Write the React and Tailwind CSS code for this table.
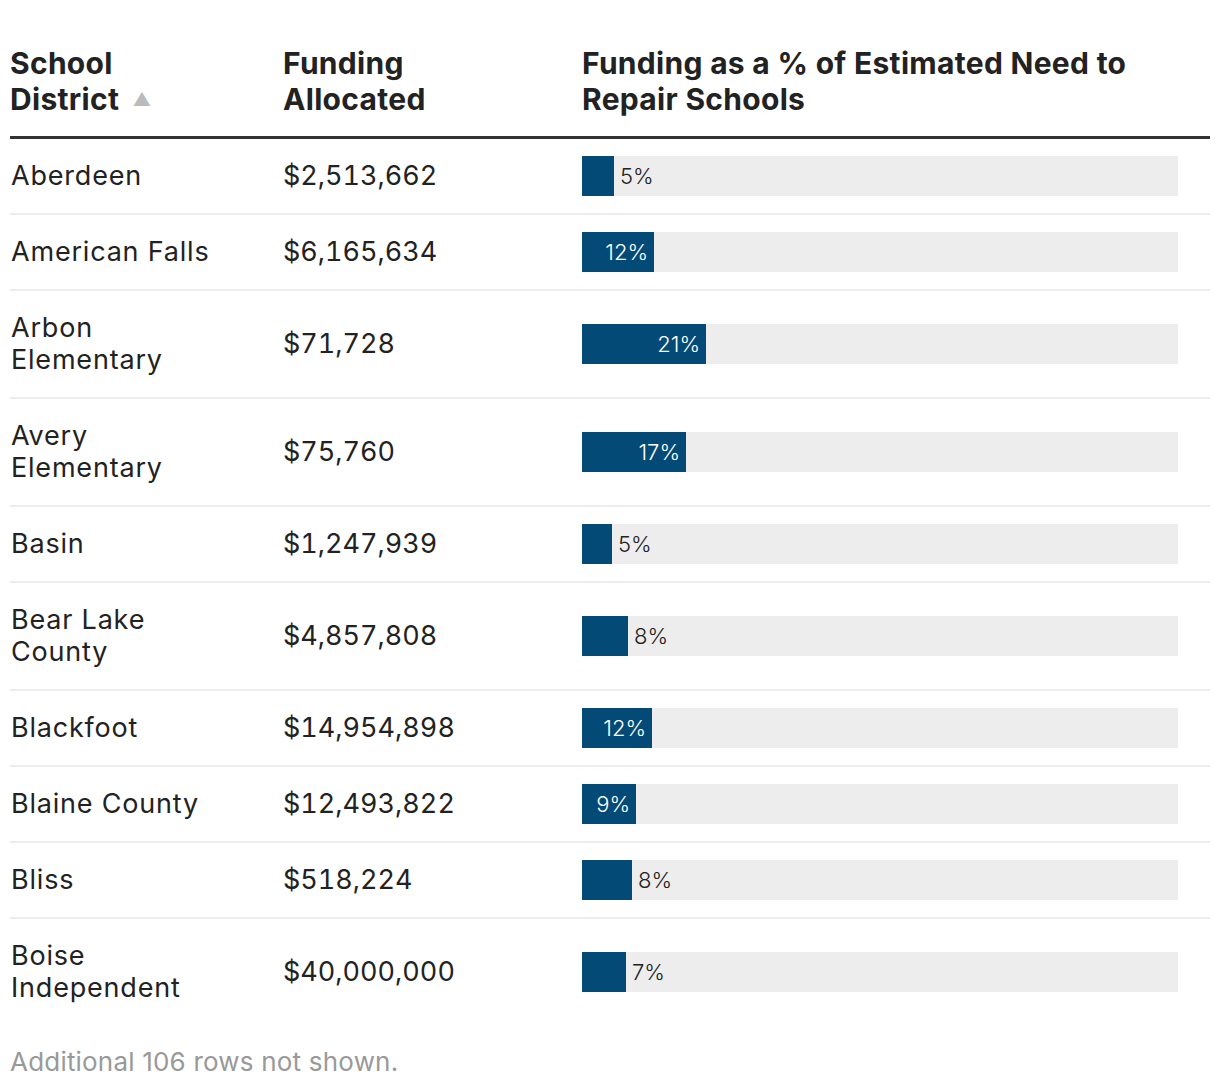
import React from 'react';

const rows = [
  { name: 'Aberdeen', amount: '$2,513,662', pct: '5%', w: 32 },
  { name: 'American Falls', amount: '$6,165,634', pct: '12%', w: 72 },
  { name: 'Arbon Elementary', amount: '$71,728', pct: '21%', w: 124, wrap: ['Arbon', 'Elementary'] },
  { name: 'Avery Elementary', amount: '$75,760', pct: '17%', w: 104, wrap: ['Avery', 'Elementary'] },
  { name: 'Basin', amount: '$1,247,939', pct: '5%', w: 30 },
  { name: 'Bear Lake County', amount: '$4,857,808', pct: '8%', w: 46, wrap: ['Bear Lake', 'County'] },
  { name: 'Blackfoot', amount: '$14,954,898', pct: '12%', w: 70 },
  { name: 'Blaine County', amount: '$12,493,822', pct: '9%', w: 54 },
  { name: 'Bliss', amount: '$518,224', pct: '8%', w: 50 },
  { name: 'Boise Independent', amount: '$40,000,000', pct: '7%', w: 44, wrap: ['Boise', 'Independent'], last: true },
];

const Bar = ({ pct, w }) => {
  const inside = w >= 54;
  return (
    <div className="relative h-[40px] w-[596px] bg-[#ededed] flex items-center">
      <div
        className="h-full bg-[#034a76] flex items-center justify-end pr-[6px]"
        style={{ width: w }}
      >
        {inside && <span className="text-white text-[22px] leading-none font-light">{pct}</span>}
      </div>
      {!inside && <span className="ml-[6px] text-[#222] text-[22px] leading-none font-light">{pct}</span>}
    </div>
  );
};

export default function App() {
  return (
    <div className="bg-white w-[1220px] h-[1090px] px-[10px] text-[#222]" style={{ fontFamily: 'Inter, "Liberation Sans", sans-serif' }}>
      <div className="grid grid-cols-[273px_299px_628px] pt-[45px] pb-[16px] border-b-[3px] border-[#333] font-bold text-[30px] leading-[36px] tracking-[0.3px]">
        <div>
          School
          <br />
          District <span className="text-[#bbb] text-[18px] align-middle relative -top-[2px] ml-[6px]">▲</span>
        </div>
        <div>
          Funding
          <br />
          Allocated
        </div>
        <div className="max-w-[560px]">Funding as a % of Estimated Need to Repair Schools</div>
      </div>
      {rows.map((r) => (
        <div
          key={r.name}
          className={
            r.last
              ? 'grid grid-cols-[273px_299px_628px] items-center py-[21px] text-[27px] leading-[32px]'
              : 'grid grid-cols-[273px_299px_628px] items-center py-[21px] text-[27px] leading-[32px] border-b-2 border-[#ececec]'
          }
        >
          <div className="pl-[1px] tracking-[0.8px]">
            {r.wrap ? (
              <>
                {r.wrap[0]}
                <br />
                {r.wrap[1]}
              </>
            ) : (
              r.name
            )}
          </div>
          <div className="tabular-nums">{r.amount}</div>
          <div className="h-[32px] flex items-center">
            <Bar pct={r.pct} w={r.w} />
          </div>
        </div>
      ))}
      <div className="mt-[21px] text-[26px] leading-[32px] text-[#999] tracking-[0.2px]">Additional 106 rows not shown.</div>
    </div>
  );
}
